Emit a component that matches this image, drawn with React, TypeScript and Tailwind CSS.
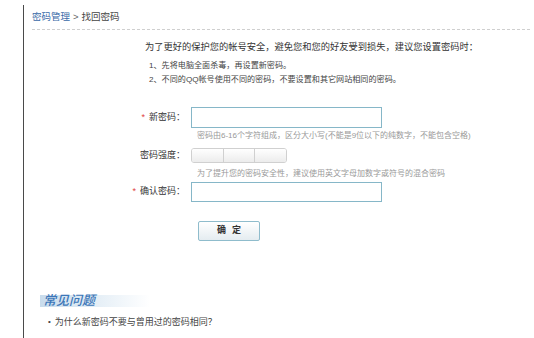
export default function App() {
  return (
    <div className="w-[534px] h-[338px] bg-white overflow-hidden pt-[5px] font-['Liberation_Sans','Noto_Sans_CJK_SC',sans-serif] text-[#333]">
      <div className="ml-[23px] h-full border-l border-[#4a4a4a] pl-[8px] pr-[4px]">
        <div className="h-[25px] flex items-end pb-[6px] border-b border-dashed border-[#cfcfcf] text-[9.5px] leading-[12px]">
          <span className="text-[#3a6aa8]">密码管理</span>
          <span className="text-[#666] mx-[3px]">&gt;</span>
          <span className="text-[#444]">找回密码</span>
        </div>

        <div className="ml-[113px] mt-[11px]">
          <p className="text-[9.25px] leading-[12px] text-[#333]">为了更好的保护您的帐号安全，避免您和您的好友受到损失，建议您设置密码时：</p>
          <ul className="mt-[6px] ml-[4px] text-[8.1px] leading-[14px] text-[#444]">
            <li>1、先将电脑全面杀毒，再设置新密码。</li>
            <li>2、不同的QQ帐号使用不同的密码，不要设置和其它网站相同的密码。</li>
          </ul>
        </div>

        <div className="mt-[20px] grid grid-cols-[155px_1fr] gap-x-[4px] text-[9px]">
          <Label required text="新密码：" />
          <div className="w-[191px] h-[21px] border border-[#86b7c8] bg-white" />
          <div />
          <p className="mt-[2px] pl-[6px] text-[8px] leading-[12px] text-[#999]">密码由6-16个字符组成，区分大小写(不能是9位以下的纯数字，不能包含空格)</p>

          <Label text="密码强度：" className="mt-[6px]" />
          <div className="mt-[6px] flex w-[96px] h-[15px] rounded-[3px] border border-[#d0d0d0] overflow-hidden">
            <div className="flex-1 bg-gradient-to-b from-white to-[#ececec]" />
            <div className="flex-1 border-l border-[#d0d0d0] bg-gradient-to-b from-white to-[#ececec]" />
            <div className="flex-1 border-l border-[#d0d0d0] bg-gradient-to-b from-white to-[#ececec]" />
          </div>
          <div />
          <p className="mt-[5px] pl-[6px] text-[8px] leading-[12px] text-[#999]">为了提升您的密码安全性，建议使用英文字母加数字或符号的混合密码</p>

          <Label required text="确认密码：" className="mt-[2px]" />
          <div className="mt-[2px] w-[191px] h-[20px] border border-[#86b7c8] bg-white" />
          <div />
          <div className="mt-[19px] ml-[7px]">
            <button className="w-[62px] h-[20px] rounded-[2px] border border-[#8fbccc] bg-gradient-to-b from-white to-[#e4ecf0] text-[9px] font-bold text-[#333] tracking-[6px] pl-[6px]">确定</button>
          </div>
        </div>

        <div className="mt-[54px] ml-[8px] w-[110px] h-[12px] flex items-center pl-[3px] bg-gradient-to-r from-[#c9dcec] via-[#e4eef6] to-white">
          <span className="text-[13px] leading-[12px] italic font-medium text-[#3d77b8]">常见问题</span>
        </div>
        <div className="mt-[9px] ml-[16px] flex items-center text-[9px] leading-[12px] text-[#444]">
          <span className="mr-[4px] text-[8px]">•</span>
          <span>为什么新密码不要与曾用过的密码相同？</span>
        </div>
      </div>
    </div>
  );
}

function Label({ text, required, className = '' }: { text: string; required?: boolean; className?: string }) {
  return (
    <div className={`flex items-center justify-end pr-[2px] text-[9px] text-[#333] ${className}`}>
      {required && <span className="text-[#e04040] mr-[4px]">*</span>}
      <span>{text}</span>
    </div>
  );
}
